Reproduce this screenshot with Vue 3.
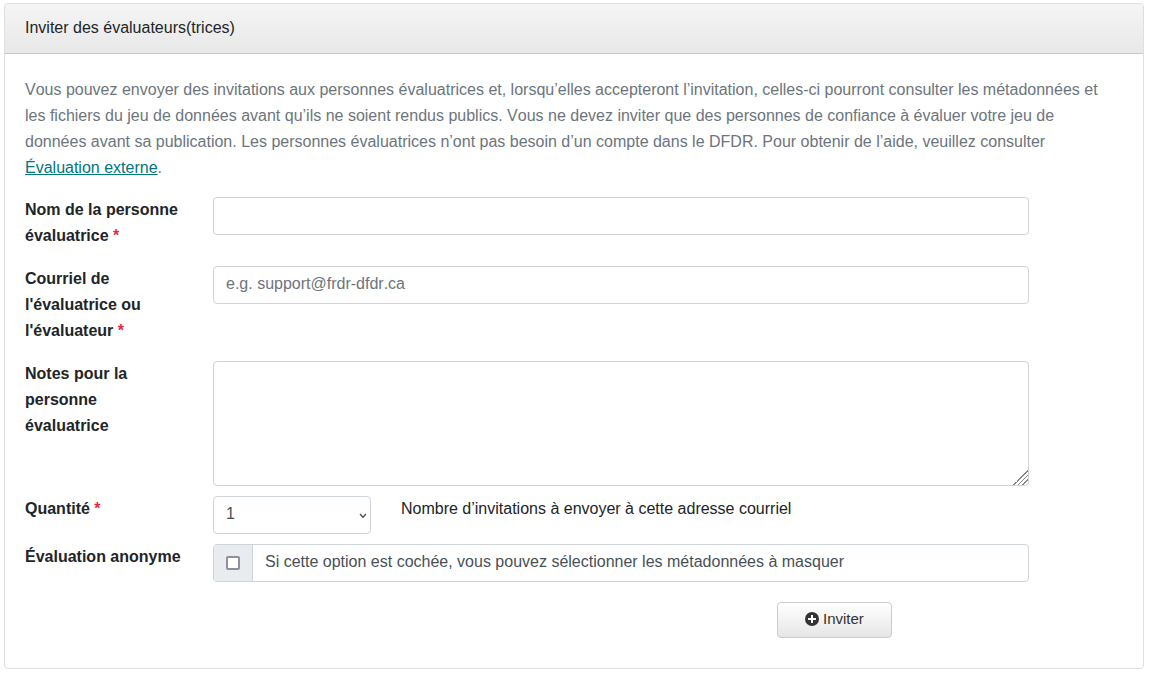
<script setup>
import { ref } from 'vue'

const name = ref('')
const email = ref('')
const notes = ref('')
const quantity = ref(1)
const anonymous = ref(false)
const quantities = [1, 2, 3, 4, 5]
</script>

<template>
  <main class="page">
    <section class="card">
      <header class="card-header">Inviter des évaluateurs(trices)</header>
      <form class="card-body" @submit.prevent>
        <p class="intro">
          Vous pouvez envoyer des invitations aux personnes évaluatrices et, lorsqu’elles accepteront l’invitation, celles-ci pourront consulter les métadonnées et les fichiers du jeu de données avant qu’ils ne soient rendus publics. Vous ne devez inviter que des personnes de confiance à évaluer votre jeu de données avant sa publication. Les personnes évaluatrices n’ont pas besoin d’un compte dans le DFDR. Pour obtenir de l’aide, veuillez consulter <a href="#">Évaluation externe</a>.
        </p>

        <div class="row spaced">
          <label class="label" for="name">Nom de la personne évaluatrice <span class="required">*</span></label>
          <input id="name" v-model="name" class="control wide" type="text">
        </div>

        <div class="row spaced">
          <label class="label" for="email">Courriel de l'évaluatrice ou l'évaluateur <span class="required">*</span></label>
          <input id="email" v-model="email" class="control wide" type="email" placeholder="e.g. support@frdr-dfdr.ca">
        </div>

        <div class="row">
          <label class="label" for="notes">Notes pour la personne évaluatrice</label>
          <textarea id="notes" v-model="notes" class="control area wide"></textarea>
        </div>

        <div class="row">
          <label class="label" for="quantity">Quantité <span class="required">*</span></label>
          <div class="select-wrap">
            <select id="quantity" v-model="quantity" class="control select">
              <option v-for="n in quantities" :key="n" :value="n">{{ n }}</option>
            </select>
            <svg class="chevron" viewBox="0 0 8 6" aria-hidden="true"><path d="M1 1l3 3.2L7 1" /></svg>
          </div>
          <span class="hint">Nombre d’invitations à envoyer à cette adresse courriel</span>
        </div>

        <div class="row">
          <label class="label" for="anonymous">Évaluation anonyme</label>
          <div class="group wide">
            <span class="addon"><input id="anonymous" v-model="anonymous" class="check" type="checkbox"></span>
            <label class="group-text" for="anonymous">Si cette option est cochée, vous pouvez sélectionner les métadonnées à masquer</label>
          </div>
        </div>

        <div class="row actions">
          <button class="button" type="submit">
            <svg class="plus" viewBox="0 0 14 14" aria-hidden="true">
              <circle cx="7" cy="7" r="7" />
              <path d="M7 3v8M3 7h8" />
            </svg>
            Inviter
          </button>
        </div>
      </form>
    </section>
  </main>
</template>

<style>
body {
  margin: 0;
  background: #fff;
}
</style>

<style scoped>
* {
  box-sizing: border-box;
}

.page {
  padding: 3px 5px 4px 4px;
  color: #212529;
  font-family: "Liberation Sans", Arial, sans-serif;
  font-size: 16px;
  font-kerning: none;
  line-height: 26px;
}

.card {
  border: 1px solid #dfdfdf;
  border-radius: 4px;
  background: #fff;
}

.card-header {
  padding: 11px 20px 12px;
  border-bottom: 1px solid #c8c8c8;
  border-radius: 3px 3px 0 0;
  background: linear-gradient(#f5f5f5, #e8e8e8);
}

.card-body {
  padding: 23px 20px 30px;
}

.intro {
  margin: 0 0 16px;
  padding-right: 12px;
  color: #6c757d;
}

.intro a {
  color: #007680;
  text-decoration: underline;
}

.row {
  display: grid;
  grid-template-columns: repeat(12, minmax(0, 1fr));
  column-gap: 30px;
  align-items: start;
  margin-bottom: 10px;
}

.row.spaced {
  margin-bottom: 17px;
}

.label {
  grid-column: span 2;
  font-weight: 700;
}

.required {
  color: #e32b43;
}

.wide {
  grid-column: span 9;
}

.control {
  display: block;
  width: 100%;
  height: 38px;
  margin: 0;
  padding: 5px 12px 7px;
  border: 1px solid #ced4da;
  border-radius: 4px;
  background: #fff;
  color: #495057;
  font: inherit;
  line-height: 24px;
}

.control::placeholder {
  color: #6c757d;
  opacity: 1;
}

.area {
  height: 125px;
  resize: vertical;
}

.area::-webkit-resizer {
  background: linear-gradient(135deg, transparent 50%, #888 50%, #888 56%, transparent 56%, transparent 64%, #888 64%, #888 70%, transparent 70%, transparent 78%, #888 78%, #888 84%, transparent 84%);
}

.select-wrap {
  position: relative;
  grid-column: span 2;
}

.select {
  appearance: none;
}

.chevron {
  position: absolute;
  right: 4px;
  top: 17px;
  width: 8px;
  height: 6px;
  fill: none;
  stroke: #495057;
  stroke-width: 1.3;
}

.hint {
  grid-column: span 8;
}

.group {
  display: flex;
  height: 38px;
  overflow: hidden;
  border: 1px solid #ced4da;
  border-radius: 4px;
}

.addon {
  display: flex;
  align-items: center;
  padding: 0 12px;
  border-right: 1px solid #ced4da;
  background: #e9ecef;
}

.check {
  appearance: none;
  width: 14px;
  height: 14px;
  margin: 0;
  border: 2px solid #8f8f9d;
  border-radius: 2px;
  background: #fff;
}

.check:checked {
  background: #007680;
}

.group-text {
  padding: 4px 12px;
  color: #495057;
}

.row.actions {
  margin: 20px 0 0;
}

.button {
  display: flex;
  grid-column: 9 / span 2;
  align-items: center;
  justify-content: center;
  justify-self: start;
  gap: 4px;
  height: 36px;
  padding: 0 27px 2px;
  border: 1px solid #ccc;
  border-radius: 4px;
  background: linear-gradient(#fff, #e6e6e6);
  color: #333;
  font: inherit;
  font-size: 15px;
}

.plus {
  width: 14px;
  height: 14px;
  fill: #333;
}

.plus path {
  stroke: #fff;
  stroke-width: 2;
}
</style>
